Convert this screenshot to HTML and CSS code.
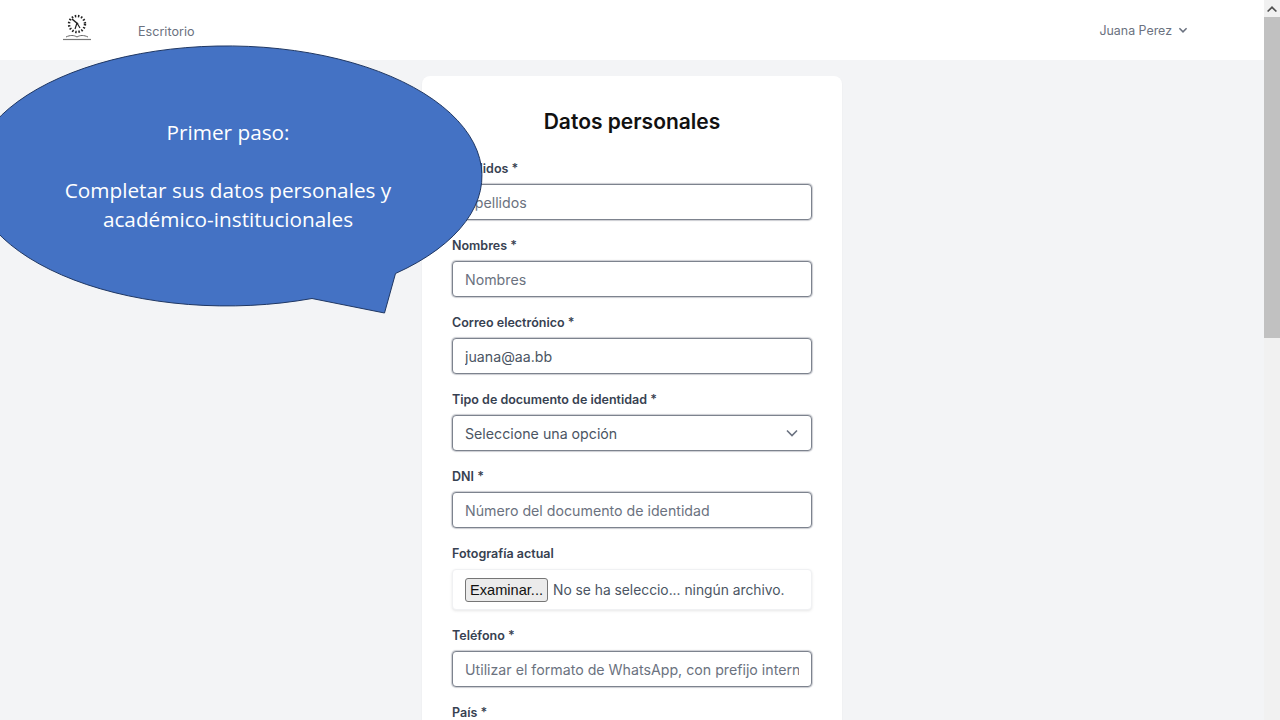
FILE: index.html
```html
<!DOCTYPE html>
<html lang="es">
<head>
  <meta charset="UTF-8">
  <meta name="viewport" content="width=device-width, initial-scale=1.0">
  <title>Datos personales</title>
  <link rel="stylesheet" href="styles.css">
</head>
<body>
  <div class="page">
    <nav class="navbar">
      <div class="nav-left">
        <svg class="logo" width="32" height="28" viewBox="0 0 32 28" fill="none" stroke="#222">
          <circle cx="16" cy="10" r="8" stroke-width="2.400" stroke-dasharray="1.500 1.700"/>
          <path d="M11 5l6 5" stroke-width="1.600"/>
          <path d="M16 9l-2 6M16 9l3 5" stroke-width="1.200"/>
          <path d="M5 23c4-2 8-2 11 0c3-2 7-2 11 0" stroke-width="1" stroke="#666"/>
          <path d="M2 25.500h28" stroke-width="1.200" stroke="#777"/>
        </svg>
        <a class="nav-link" href="#">Escritorio</a>
      </div>
      <div class="user-menu">
        <span>Juana Perez</span>
        <svg width="12" height="12" viewBox="0 0 20 20" fill="none" stroke="#6b7280" stroke-width="2.600">
          <path d="M4 7l6 6 6-6"/>
        </svg>
      </div>
    </nav>

    <main class="content">
      <form class="card">
        <h2>Datos personales</h2>

        <div class="field">
          <label for="apellidos">Apellidos *</label>
          <input type="text" id="apellidos" placeholder="Apellidos">
        </div>
        <div class="field">
          <label for="nombres">Nombres *</label>
          <input type="text" id="nombres" placeholder="Nombres">
        </div>
        <div class="field">
          <label for="correo">Correo electrónico *</label>
          <input type="text" id="correo" value="juana@aa.bb">
        </div>
        <div class="field">
          <label for="tipo">Tipo de documento de identidad *</label>
          <div class="select-wrap">
            <select id="tipo">
              <option>Seleccione una opción</option>
            </select>
            <svg class="select-arrow" width="20" height="20" viewBox="0 0 20 20" fill="none" stroke="#6b7280" stroke-width="1.600">
              <path d="M5 7.500l5 5 5-5"/>
            </svg>
          </div>
        </div>
        <div class="field">
          <label for="dni">DNI *</label>
          <input type="text" id="dni" placeholder="Número del documento de identidad">
        </div>
        <div class="field">
          <label>Fotografía actual</label>
          <div class="file-box">
            <button type="button" class="file-btn">Examinar...</button>
            <span>No se ha seleccio... ningún archivo.</span>
          </div>
        </div>
        <div class="field">
          <label for="telefono">Teléfono *</label>
          <input type="text" id="telefono" placeholder="Utilizar el formato de WhatsApp, con prefijo internacional">
        </div>
        <div class="field">
          <label for="pais">País *</label>
          <input type="text" id="pais">
        </div>
      </form>
    </main>

    <div class="callout">
      <svg class="callout-shape" width="500" height="320" viewBox="0 0 500 320">
        <path d="M312 298.500L384.500 313L395.500 273.500A255 130 0 1 0 312 298.500Z" fill="#4472c4" stroke="#1f3763" stroke-width="1"/>
      </svg>
      <div class="callout-text">
        <p>Primer paso:</p>
        <p>Completar sus datos personales y<br>académico-institucionales</p>
      </div>
    </div>
  </div>

  <div class="scrollbar">
    <div class="scroll-up">
      <svg width="10" height="6" viewBox="0 0 10 6"><path d="M0 5L5 0l5 5-1.200 1L5 2.400 1.200 6z" fill="#505050"/></svg>
    </div>
    <div class="scroll-thumb"></div>
  </div>
</body>
</html>
```

FILE: styles.css
```css
html, body {
  margin: 0;
  padding: 0;
  height: 100%;
  overflow: hidden;
}

body {
  display: flex;
  background: #f3f4f6;
  font-family: 'Inter', sans-serif;
  color: #111827;
}

.page {
  flex: 1;
  position: relative;
  height: 720px;
  overflow: hidden;
}

.navbar {
  height: 60px;
  background: #fff;
  display: flex;
  justify-content: space-between;
  align-items: center;
  padding: 0 75px 0 61px;
}

.nav-left {
  display: flex;
  align-items: center;
  gap: 45px;
}

.logo {
  margin-top: -5px;
}

.nav-link {
  color: #6b7280;
  font-size: 12.600px;
  text-decoration: none;
  margin-top: 2px;
}

.user-menu {
  display: flex;
  align-items: center;
  gap: 5px;
  color: #6b7280;
  font-size: 12.400px;
}

.content {
  display: flex;
  justify-content: center;
  padding-top: 16px;
}

.card {
  width: 360px;
  padding: 31px 30px 30px;
  background: #fff;
  border-radius: 8px;
  box-shadow: 0 1px 2px rgba(0, 0, 0, 0.05);
}

h2 {
  margin: 0 0 21px;
  text-align: center;
  font-size: 21px;
  line-height: 30px;
  font-weight: 600;
  color: #111;
}

.field {
  margin-bottom: 15px;
}

label {
  display: block;
  height: 20px;
  margin-bottom: 6px;
  font-size: 12.500px;
  line-height: 21px;
  font-weight: 600;
  color: #374151;
}

input, select {
  display: block;
  width: 100%;
  height: 36px;
  padding: 0 12px;
  box-sizing: border-box;
  background: #fff;
  border: 1px solid #7d838e;
  border-radius: 4px;
  box-shadow: 0 0 1px 1px rgba(125, 131, 142, 0.4);
  font-family: 'Inter', sans-serif;
  font-size: 14.200px;
  color: #4b5563;
}

input::placeholder {
  color: #6b7280;
}

select {
  appearance: none;
}

.select-wrap {
  position: relative;
}

.select-arrow {
  position: absolute;
  top: 8px;
  right: 10px;
}

.file-box {
  display: flex;
  align-items: center;
  gap: 5px;
  height: 41px;
  padding: 0 12px;
  box-sizing: border-box;
  background: #fff;
  border: 1px solid #f0f1f3;
  border-radius: 4px;
  box-shadow: 0 1px 3px rgba(0, 0, 0, 0.1);
  font-size: 13.800px;
  color: #4b5563;
}

.file-btn {
  width: 83px;
  height: 24px;
  padding: 0;
  background: #ebebeb;
  border: 1px solid #767676;
  border-radius: 3px;
  font-family: 'Liberation Sans', sans-serif;
  font-size: 14.600px;
  color: #111;
}

.callout {
  position: absolute;
  top: 0;
  left: 0;
  width: 500px;
  height: 320px;
}

.callout-shape {
  display: block;
}

.callout-text {
  position: absolute;
  top: 118px;
  left: 0;
  width: 456px;
  text-align: center;
  font-family: 'Open Sans', sans-serif;
  font-size: 20.750px;
  line-height: 29px;
  color: #fff;
}

.callout-text p {
  margin: 0 0 29px;
}

.scrollbar {
  width: 16px;
  height: 720px;
  background: #f1f1f1;
}

.scroll-up {
  height: 17px;
  display: flex;
  align-items: center;
  justify-content: center;
}

.scroll-thumb {
  height: 321px;
  background: #c1c1c1;
}
```
